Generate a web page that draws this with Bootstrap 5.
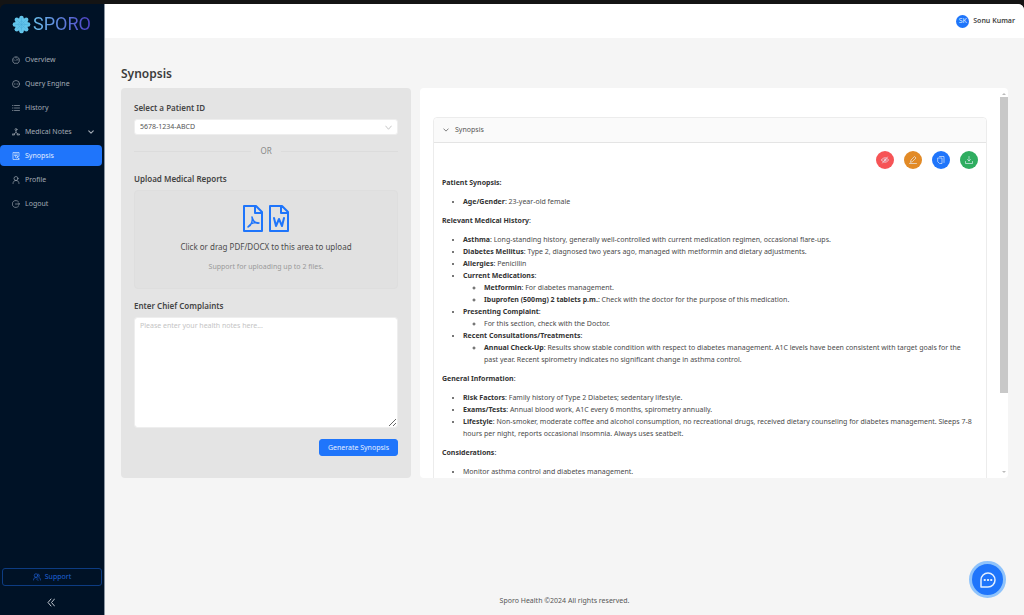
<!DOCTYPE html>
<html lang="en">
<head>
<meta charset="utf-8">
<meta name="viewport" content="width=device-width, initial-scale=1">
<title>Sporo – Synopsis</title>
<link rel="stylesheet" href="https://cdn.jsdelivr.net/npm/bootstrap@5.3.0/dist/css/bootstrap.min.css">
<style>
:root{--brand:#1f75fb;--navy:#001226}
body{font-family:"Noto Sans","Open Sans",sans-serif;font-size:7px;line-height:12px;color:#4a4a4a;background:#141414}
svg{display:block;flex:none}
.ico{fill:none;stroke:currentColor;stroke-width:1.3;stroke-linecap:round;stroke-linejoin:round}
.ico.bold-2{stroke-width:2}
.ico.bold-3{stroke-width:3}
.shell{padding-top:4px}
.sidebar{width:105px;background:var(--navy);border-top-left-radius:6px;border-right:1px solid #8b95a1;padding:10px 2px 5px 0}
.brand{height:20px;gap:2px;padding-left:12px;margin-bottom:15px}
.brand span{font-family:Roboto,sans-serif;font-weight:400;font-size:18px;line-height:20px;background:linear-gradient(90deg,#6bc0ec,#5f7fdc 50%,#4e3fc4);-webkit-background-clip:text;background-clip:text;color:transparent}
.menu{gap:3px}
.menu .nav-link{height:21px;padding:0 8px 0 12px;gap:5px;font-size:7px;color:#a3abb5;border-radius:4px}
.menu .nav-link.active{background:var(--brand);color:#e4efff}
.support{height:18px;font-size:7px;line-height:12px;padding:0;margin:0 0 0 2px;color:#1f62d8;border:1px solid #0d3c82;border-radius:3px;gap:4px}
.collapse-btn{line-height:16px;color:#bfc6cf;margin-top:8px;padding:0;height:16px}
.page{background:#f5f5f5;border-top-right-radius:6px;min-width:0}
.topbar{height:34px;background:#fff;border-top-right-radius:6px;padding:0 9px;gap:4px}
.avatar{width:13px;height:13px;background:var(--brand);color:#dcebff}
.user{font-weight:600;color:#444}
.content{padding:27px 16px 0}
.title{font-size:12px;line-height:18px;font-weight:600;color:#3c3c3c;margin-bottom:5px}
.panes{display:grid;grid-template-columns:minmax(0,290fr) minmax(0,588fr);gap:9px}
.entry{background:#e4e4e4;border-radius:4px;padding:13px 13px 22px}
.field-label{display:block;font-size:8px;line-height:14px;font-weight:600;color:#444;margin:0 0 4px}
.entry .form-select,.entry .form-control{font-size:7px;line-height:12px;border:1px solid #eee;border-radius:3px;background-color:#fff;color:#555}
.entry .form-select{height:16px;padding:0 20px 0 5px;background-size:7px 7px;background-position:right 5px center;background-image:url("data:image/svg+xml,%3Csvg xmlns='http://www.w3.org/2000/svg' viewBox='0 0 16 16'%3E%3Cpath d='M1 4l7 8 7-8' fill='none' stroke='%23aaa' stroke-width='1.5'/%3E%3C/svg%3E")}
.entry .form-control{height:111px;min-height:0;padding:2px 5px;margin-bottom:11px;resize:vertical}
.entry .form-control::placeholder{color:#c4c4c4}
.or{margin:9px 0 14px;font-size:8px;line-height:14px;color:#888;gap:9px}
.or::before,.or::after{content:"";flex:1;border-top:1px solid #dcdcdc}
.drop{height:99px;background:#e1e1e1;border:1px solid #dedede;border-radius:4px;padding-top:14px;margin-bottom:10px;color:var(--brand);cursor:pointer}
.drop strong{font-size:8px;font-weight:400;color:#4c4c4c;margin:9px 0 8px}
.drop small{font-size:7px;color:#999}
.generate{height:17px;padding:0 8px;font-size:7px;line-height:12px;background:var(--brand);border:1px solid var(--brand);border-radius:3px;color:#e4efff}
.result{background:#fff;border-radius:4px;overflow:hidden;contain:size}
.scroller{overflow-y:auto;scrollbar-width:none;padding:29px 13px 0;min-width:0}
.scroller::-webkit-scrollbar{display:none}
.track{width:8px;padding:3px 0;color:#bbb}
.thumb{width:8px;flex:0 0 77%;background:#c8c8c8}
.tip{width:4px;height:4px;margin:1px 0}
.sheet{border:1px solid #ececec;border-radius:4px 4px 0 0}
.sheet-head{height:25px;width:100%;background:#fafafa;border:0;border-bottom:1px solid #e4e4e4;border-radius:4px 4px 0 0;padding:0 9px;gap:6px;color:#555}
.sheet-body{padding:8px 8px 40px}
.tools{gap:10px;margin-bottom:8px}
.round{width:18px;height:18px;border:0;border-radius:50%;padding:0;color:#e8f0fa}
.red{background:#f65456}.amber{background:#e28a26}.blue{background:var(--brand)}.green{background:#2fad60}
.report p{margin:0 0 7px}
.report b{font-weight:700;color:#333}
.report ul{margin:0 0 7px;padding-left:21px}
.report ul ul{margin:0;padding-right:6px}
.foot{color:#555;padding:8px;font-size:7px}
.chat{position:fixed;right:18px;bottom:17px;width:37px;height:37px;border-radius:50%;border:3px solid #8fc3fb;background:var(--brand);color:#e4f0ff;padding:0}
</style>
</head>
<body>
<div class="shell d-flex min-vh-100">
  <aside class="sidebar d-flex flex-column flex-shrink-0">
    <div class="brand d-flex align-items-center">
      <svg width="19" height="19" viewBox="0 0 20 20"><g fill="#62c4ea"><circle cx="10" cy="10" r="7"/><circle cx="10" cy="3" r="2.3"/><circle cx="15" cy="5" r="2.3"/><circle cx="17" cy="10" r="2.3"/><circle cx="15" cy="15" r="2.3"/><circle cx="10" cy="17" r="2.3"/><circle cx="5" cy="15" r="2.3"/><circle cx="3" cy="10" r="2.3"/><circle cx="5" cy="5" r="2.3"/></g><path d="M10 3v14M3 10h14M5 5l10 10M15 5L5 15M10 6l4 4-4 4-4-4z" stroke="#48abd8" stroke-width=".5" fill="none"/></svg>
      <span>SPORO</span>
    </div>
    <nav class="menu nav flex-column">
      <a class="nav-link d-flex align-items-center" href="#"><svg class="ico" width="8" height="8" viewBox="0 0 16 16"><path d="M3.500 14a7 7 0 1 1 9 0zM8 9l3-3M8 3v1M3.500 8h1M11.500 8h1"/></svg>Overview</a>
      <a class="nav-link d-flex align-items-center" href="#"><svg class="ico" width="8" height="8" viewBox="0 0 16 16"><circle cx="8" cy="8" r="7"/><path d="M4.800 8h.4M7.800 8h.4M10.800 8h.4"/></svg>Query Engine</a>
      <a class="nav-link d-flex align-items-center" href="#"><svg class="ico" width="8" height="8" viewBox="0 0 16 16"><path d="M5 3h10M5 8h10M5 13h10M1 3h1M1 8h1M1 13h1"/></svg>History</a>
      <a class="nav-link d-flex align-items-center" href="#"><svg class="ico" width="8" height="8" viewBox="0 0 16 16"><circle cx="8" cy="3" r="2"/><path d="M8 5v4M8 9l-4 3M8 9l4 3M1 12h4v2H1zM11 12h4v2h-4z"/></svg>Medical Notes<svg class="ico bold-3 ms-auto" width="6" height="6" viewBox="0 0 16 16"><path d="M2 5l6 6 6-6"/></svg></a>
      <a class="nav-link active d-flex align-items-center" href="#" aria-current="page"><svg class="ico" width="8" height="8" viewBox="0 0 16 16"><path d="M14 8V1H2v14h12v-2M5 4h6M5 7h3"/><circle cx="9.500" cy="9.500" r="2.500"/><path d="M11.500 11.500L14 14"/></svg>Synopsis</a>
      <a class="nav-link d-flex align-items-center" href="#"><svg class="ico" width="8" height="8" viewBox="0 0 16 16"><circle cx="8" cy="5" r="4"/><path d="M2 15c0-4 2.500-6 6-6s6 2 6 6"/></svg>Profile</a>
      <a class="nav-link d-flex align-items-center" href="#"><svg class="ico" width="8" height="8" viewBox="0 0 16 16"><path d="M13 3.500a7 7 0 1 0 0 9M7 8h8M13 6l2 2-2 2"/></svg>Logout</a>
    </nav>
    <button class="support btn d-flex align-items-center justify-content-center mt-auto" type="button"><svg class="ico" width="8" height="8" viewBox="0 0 16 16"><circle cx="6" cy="5" r="3.500"/><path d="M1 14c0-3.500 2-5 5-5 2 0 3 1 4 2M10 2c3 0 4 4 1 6 2 1 4 3 4 6M7 12l3 3"/></svg>Support</button>
    <button class="collapse-btn btn border-0" type="button" aria-label="Collapse menu"><svg class="ico bold-2 mx-auto" width="8" height="9" viewBox="0 0 16 18"><path d="M8 2L2 9l6 7M15 2L9 9l6 7"/></svg></button>
  </aside>

  <div class="page d-flex flex-column flex-grow-1">
    <header class="topbar d-flex align-items-center justify-content-end">
      <span class="avatar rounded-circle d-flex align-items-center justify-content-center">SK</span>
      <span class="user">Sonu Kumar</span>
    </header>

    <main class="content">
      <h1 class="title">Synopsis</h1>
      <div class="panes">
        <form class="entry">
          <label class="field-label" for="patient">Select a Patient ID</label>
          <select class="form-select" id="patient"><option>5678-1234-ABCD</option></select>
          <div class="or d-flex align-items-center">OR</div>
          <label class="field-label" for="reports">Upload Medical Reports</label>
          <label class="drop d-flex flex-column align-items-center">
            <input class="visually-hidden" type="file" id="reports" multiple accept=".pdf,.docx">
            <span class="d-flex gap-1">
              <svg class="ico bold-2" width="22" height="27" viewBox="0 0 22 27"><path d="M2 1h12l6 6v19H2zM13 1v7h7"/><path stroke-width="1.500" d="M10 12c1 4 3 7 7 6-4-1-8 0-11 4 3-1 5-6 4-10z"/></svg>
              <svg class="ico bold-2" width="22" height="27" viewBox="0 0 22 27"><path d="M2 1h12l6 6v19H2zM13 1v7h7M6 13l2 8 3-7 3 7 2-8"/></svg>
            </span>
            <strong>Click or drag PDF/DOCX to this area to upload</strong>
            <small>Support for uploading up to 2 files.</small>
          </label>
          <label class="field-label" for="complaints">Enter Chief Complaints</label>
          <textarea class="form-control" id="complaints" placeholder="Please enter your health notes here..."></textarea>
          <div class="d-flex justify-content-end"><button class="generate btn" type="button">Generate Synopsis</button></div>
        </form>

        <section class="result d-flex">
          <div class="scroller flex-grow-1">
            <div class="sheet">
              <button class="sheet-head d-flex align-items-center" type="button" aria-expanded="true"><svg class="ico bold-2" width="6" height="6" viewBox="0 0 16 16"><path d="M2 5l6 6 6-6"/></svg>Synopsis</button>
              <div class="sheet-body">
                <div class="tools d-flex justify-content-end">
                  <button class="round red d-flex align-items-center justify-content-center" type="button" aria-label="Hide"><svg class="ico" width="8" height="8" viewBox="0 0 16 16"><path d="M1 8c3-6 11-6 14 0-3 6-11 6-14 0zM3 14L13 2"/><circle cx="8" cy="8" r="2"/></svg></button>
                  <button class="round amber d-flex align-items-center justify-content-center" type="button" aria-label="Edit"><svg class="ico" width="8" height="8" viewBox="0 0 16 16"><path d="M3 12l1-4 7-7 3 3-7 7zM1 15h14"/></svg></button>
                  <button class="round blue d-flex align-items-center justify-content-center" type="button" aria-label="Copy"><svg class="ico" width="8" height="8" viewBox="0 0 16 16"><path d="M5 1h9v12M2 4h8v11H5l-3-3z"/></svg></button>
                  <button class="round green d-flex align-items-center justify-content-center" type="button" aria-label="Download"><svg class="ico" width="8" height="8" viewBox="0 0 16 16"><path d="M8 1v9M5 7l3 3 3-3M1 11v4h14v-4"/></svg></button>
                </div>
                <div class="report">
                  <p><b>Patient Synopsis:</b></p>
                  <ul><li><b>Age/Gender</b>: 23-year-old female</li></ul>
                  <p><b>Relevant Medical History</b>:</p>
                  <ul>
                    <li><b>Asthma</b>: Long-standing history, generally well-controlled with current medication regimen, occasional flare-ups.</li>
                    <li><b>Diabetes Mellitus</b>: Type 2, diagnosed two years ago, managed with metformin and dietary adjustments.</li>
                    <li><b>Allergies</b>: Penicillin</li>
                    <li><b>Current Medications</b>:
                      <ul><li><b>Metformin</b>: For diabetes management.</li><li><b>Ibuprofen (500mg) 2 tablets p.m.</b>: Check with the doctor for the purpose of this medication.</li></ul></li>
                    <li><b>Presenting Complaint</b>:
                      <ul><li>For this section, check with the Doctor.</li></ul></li>
                    <li><b>Recent Consultations/Treatments</b>:
                      <ul><li><b>Annual Check-Up</b>: Results show stable condition with respect to diabetes management. A1C levels have been consistent with target goals for the past year. Recent spirometry indicates no significant change in asthma control.</li></ul></li>
                  </ul>
                  <p><b>General Information</b>:</p>
                  <ul>
                    <li><b>Risk Factors</b>: Family history of Type 2 Diabetes; sedentary lifestyle.</li>
                    <li><b>Exams/Tests</b>: Annual blood work, A1C every 6 months, spirometry annually.</li>
                    <li><b>Lifestyle</b>: Non-smoker, moderate coffee and alcohol consumption, no recreational drugs, received dietary counseling for diabetes management. Sleeps 7-8 hours per night, reports occasional insomnia. Always uses seatbelt.</li>
                  </ul>
                  <p><b>Considerations</b>:</p>
                  <ul><li>Monitor asthma control and diabetes management.</li></ul>
                </div>
              </div>
            </div>
          </div>
          <div class="track d-flex flex-column align-items-center" aria-hidden="true">
            <svg class="tip" viewBox="0 0 4 4"><path d="M0 3l2-2 2 2z" fill="currentColor"/></svg>
            <div class="thumb"></div>
            <svg class="tip mt-auto" viewBox="0 0 4 4"><path d="M0 1l2 2 2-2z" fill="currentColor"/></svg>
          </div>
        </section>
      </div>
    </main>

    <footer class="foot text-center mt-auto">Sporo Health ©2024 All rights reserved.</footer>
  </div>
</div>
<button class="chat d-flex align-items-center justify-content-center" type="button" aria-label="Open chat"><svg class="ico" width="18" height="18" viewBox="0 0 18 18"><path d="M2 16V9a7 7 0 1 1 7 7z" stroke-width="1.500"/><path d="M5.500 9h.5M8.800 9h.5M12 9h.5" stroke-width="1.800"/></svg></button>
<script src="https://cdn.jsdelivr.net/npm/bootstrap@5.3.0/dist/js/bootstrap.bundle.min.js"></script>
</body>
</html>
